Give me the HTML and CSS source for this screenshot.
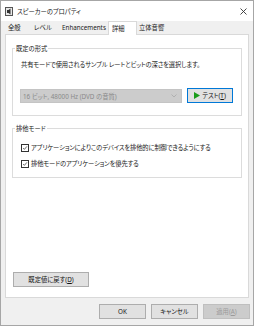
FILE: index.html
```html
<!DOCTYPE html>
<html lang="ja">
<head>
<meta charset="utf-8">
<link rel="stylesheet" href="styles.css">
</head>
<body>
<div class="window">
  <div class="titlebar">
    <svg class="appicon" width="8" height="9" viewBox="0 0 8 9">
      <rect x="0.5" y="0.5" width="7" height="8" fill="#e8e8e8" stroke="#555"/>
      <path d="M2 3 L3.5 3 L5.5 1.5 L5.5 7.5 L3.5 6 L2 6 Z" fill="#333"/>
    </svg>
    <span class="title">スピーカーのプロパティ</span>
    <svg class="close" width="7" height="7" viewBox="0 0 7 7">
      <path d="M0.5 0.5 L6.5 6.5 M6.5 0.5 L0.5 6.5" stroke="#333" stroke-width="0.9"/>
    </svg>
  </div>
  <div class="tabs">
    <div class="tab t1">全般</div>
    <div class="tab t2">レベル</div>
    <div class="tab t3">Enhancements</div>
    <div class="tab t4 active">詳細</div>
    <div class="tab t5">立体音響</div>
  </div>
  <div class="panel">
    <fieldset class="group g1">
      <legend>既定の形式</legend>
      <div class="desc">共有モードで使用されるサンプル レートとビットの深さを選択します。</div>
      <div class="formatrow">
        <div class="combo">
          <span>16 ビット, 48000 Hz (DVD の音質)</span>
          <svg width="6" height="4" viewBox="0 0 6 4"><path d="M0.5 0.5 L3 3 L5.5 0.5" fill="none" stroke="#a8a8a8" stroke-width="0.8"/></svg>
        </div>
        <div class="btn test">
          <svg width="6" height="7" viewBox="0 0 6 7"><path d="M0 0 L6 3.5 L0 7 Z" fill="#1a9c1a"/></svg>
          <span>テスト(<u>T</u>)</span>
        </div>
      </div>
    </fieldset>
    <fieldset class="group g2">
      <legend>排他モード</legend>
      <div class="check">
        <span class="box"><svg width="8" height="8" viewBox="0 0 8 8"><path d="M1.5 4 L3.2 5.8 L6.6 1.8" fill="none" stroke="#222" stroke-width="0.9"/></svg></span>
        <span>アプリケーションによりこのデバイスを排他的に制御できるようにする</span>
      </div>
      <div class="check">
        <span class="box"><svg width="8" height="8" viewBox="0 0 8 8"><path d="M1.5 4 L3.2 5.8 L6.6 1.8" fill="none" stroke="#222" stroke-width="0.9"/></svg></span>
        <span>排他モードのアプリケーションを優先する</span>
      </div>
    </fieldset>
    <div class="btn reset">既定値に戻す(<u>D</u>)</div>
  </div>
  <div class="footer">
    <div class="btn fbtn">OK</div>
    <div class="btn fbtn">キャンセル</div>
    <div class="btn fbtn disabled">適用(<u>A</u>)</div>
  </div>
</div>
</body>
</html>
```
FILE: styles.css
```css
html, body {
  margin: 0;
  padding: 0;
}
body {
  width: 254px;
  height: 326px;
  overflow: hidden;
  font-family: "Noto Sans", "Noto Sans CJK JP", sans-serif;
  font-size: 6.3px;
  line-height: 9px;
  color: #1a1a1a;
  font-feature-settings: "palt";
}
.window {
  width: 254px;
  height: 326px;
  box-sizing: border-box;
  border: 1px solid #a6a6a6;
  background: #f0f0f0;
  display: flex;
  flex-direction: column;
}
.titlebar {
  height: 20px;
  flex: none;
  background: #fff;
  display: flex;
  align-items: center;
  padding: 0 6px 0 4px;
}
.appicon {
  margin-right: 4px;
}
.title {
  flex: 1;
}
.tabs {
  height: 13px;
  flex: none;
  display: flex;
  align-items: flex-end;
  padding-left: 4px;
}
.tab {
  height: 12px;
  line-height: 12px;
  box-sizing: border-box;
  padding-left: 3px;
}
.t1 { width: 26px; }
.t2 { width: 29px; }
.t3 { width: 48px; padding-left: 2px; }
.t4 { width: 29px; }
.t5 { width: 34px; padding-left: 2px; }
.tab.active {
  height: 14px;
  line-height: 13px;
  background: #fff;
  border: 1px solid #d9d9d9;
  border-bottom: none;
  margin-bottom: -1px;
  position: relative;
  padding-left: 3px;
}
.panel {
  flex: none;
  height: 264px;
  box-sizing: border-box;
  margin: 0 4px;
  background: #fff;
  border: 1px solid #d9d9d9;
  padding: 9px 6px 10px 6px;
  display: flex;
  flex-direction: column;
}
.group {
  margin: 0;
  border: 1px solid #dcdcdc;
  padding: 7px 7px 12px 8px;
  min-width: 0;
}
.group legend {
  padding: 0 1px;
  margin-left: -6px;
  line-height: 9px;
  color: #222;
}
.desc {
  white-space: nowrap;
  letter-spacing: -0.15px;
}
.formatrow {
  display: flex;
  align-items: flex-start;
  gap: 5px;
  margin-top: 19px;
  margin-left: -1px;
}
.combo {
  width: 162px;
  height: 14px;
  box-sizing: border-box;
  background: #cccccc;
  border: 1px solid #c4c4c4;
  color: #8a8a8a;
  display: flex;
  align-items: center;
  justify-content: space-between;
  padding: 0 4px 0 2px;
  margin-top: 1px;
}
.btn {
  box-sizing: border-box;
  height: 15px;
  background: #e1e1e1;
  border: 1px solid #adadad;
  display: flex;
  align-items: center;
  justify-content: center;
  color: #111;
}
.btn u {
  text-decoration: underline;
  text-underline-offset: 1px;
}
.test {
  width: 46px;
  border-color: #0078d7;
  gap: 2px;
}
.g2 {
  margin-top: 8px;
  padding: 10px 7px 9px 8px;
  display: flex;
  flex-direction: column;
  gap: 7px;
}
.check {
  display: flex;
  align-items: center;
  gap: 2px;
  white-space: nowrap;
  height: 9px;
  letter-spacing: -0.15px;
}
.box {
  width: 8px;
  height: 8px;
  box-sizing: border-box;
  border: 1px solid #333;
  background: #fff;
  display: flex;
  align-items: center;
  justify-content: center;
  flex: none;
}
.box svg {
  display: block;
}
.reset {
  margin-top: auto;
  margin-left: 1px;
  width: 76px;
}
.footer {
  flex: 1;
  display: flex;
  justify-content: flex-end;
  align-items: center;
  gap: 5px;
  padding-right: 3px;
}
.fbtn {
  width: 47px;
}
.disabled {
  background: #cccccc;
  border-color: #bfbfbf;
  color: #9a9a9a;
}
```
